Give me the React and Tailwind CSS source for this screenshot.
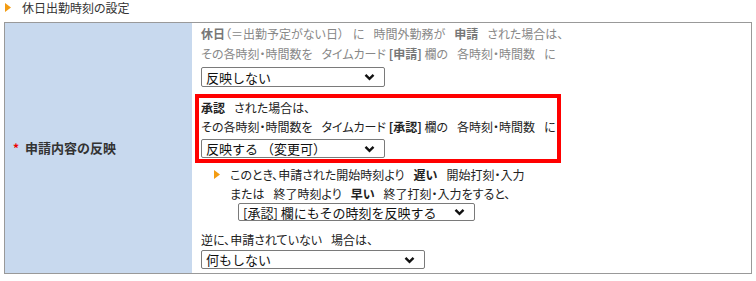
import React from 'react';

const Tri = ({ className = '' }) => (
  <svg width="6" height="9" viewBox="0 0 6 9" className={className}>
    <polygon points="0,0 6,4.5 0,9" fill="#f39c12" />
  </svg>
);

// small gap used between phrases
const G = () => <span className="inline-block w-[9px]" />;

const Select = ({ value, className = '' }) => (
  <div
    className={`relative flex items-center border border-[#7a7a7a] rounded-[2px] bg-white text-[13px] text-[#111] pl-[4px] [font-feature-settings:normal] ${className}`}
  >
    <span className="leading-none">{value}</span>
    <svg
      width="11"
      height="8"
      viewBox="0 0 11 8"
      className="absolute right-[9px] top-1/2 -translate-y-1/2"
    >
      <path d="M1.5 1.8l4 4 4-4" fill="none" stroke="#111" strokeWidth="2.4" />
    </svg>
  </div>
);

export default function App() {
  return (
    <div className="w-[756px] h-[281px] bg-white text-[12px] text-[#333] [font-family:'Noto_Sans_CJK_JP','Noto_Sans',sans-serif] [font-feature-settings:'palt']">
      {/* Title */}
      <div className="flex items-center h-[15px] pl-[5px] gap-[11px]">
        <Tri />
        <span className="text-[12px] leading-none">休日出勤時刻の設定</span>
      </div>

      {/* Table */}
      <div className="mt-[7px] ml-[4px] w-[748px] h-[252px] border border-[#999] flex overflow-hidden">
        <div className="w-[187px] bg-[#c8d9ee] flex items-center pl-[8px]">
          <span className="text-[#e00] font-bold text-[12px] mr-[6px]">*</span>
          <span className="font-bold text-[13px] text-[#333]">申請内容の反映</span>
        </div>

        <div className="flex-1 pl-[9px] pt-[1px]">
          <div className="text-[#888] leading-[20px] whitespace-nowrap">
            <div>
              <b className="text-[#777]">休日</b>（＝出勤予定がない日）<G />に<G />時間外勤務が<G />
              <b className="text-[#777]">申請</b><G />された場合は、
            </div>
            <div>
              その各時刻・時間数を<G />タイムカード <b className="text-[#777]">[申請]</b> 欄の<G />各時刻・時間数<G />に
            </div>
          </div>
          <Select value="反映しない" className="w-[184px] h-[20px] mt-[3px]" />

          {/* Highlighted block */}
          <div className="-ml-[6px] mt-[7px] w-[366px] border-[4px] border-[#ff0000] pl-[2px] pb-[1px] leading-[19px] text-[#222]">
            <div>
              <b>承認</b><G />された場合は、
            </div>
            <div className="whitespace-nowrap">
              その各時刻・時間数を<G />タイムカード <b>[承認]</b> 欄の<G />各時刻・時間数<G />に
            </div>
            <Select value="反映する （変更可）" className="w-[184px] h-[19px] mt-[3px]" />
          </div>

          <div className="mt-[2px] pl-[13px] leading-[19px] text-[#222]">
            <div className="flex items-center gap-[10px]">
              <Tri />
              <span>
                このとき、申請された開始時刻より<G />
                <b>遅い</b><G />開始打刻・入力
              </span>
            </div>
            <div className="pl-[16px]">
              または<G />終了時刻より<G />
              <b>早い</b><G />終了打刻・入力をすると、
            </div>
            <Select value="[承認] 欄にもその時刻を反映する" className="ml-[24px] w-[237px] h-[18px]" />
          </div>

          <div className="mt-[9px] leading-[20px] text-[#222]">
            逆に、申請されていない<G />場合は、
          </div>
          <Select value="何もしない" className="w-[224px] h-[19px]" />
        </div>
      </div>
    </div>
  );
}
